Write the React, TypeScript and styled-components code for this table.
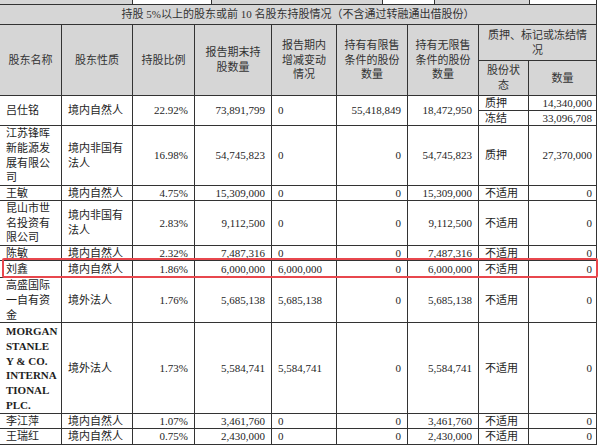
import React from "react";
import styled, { createGlobalStyle } from "styled-components";

type Pledge = { status: string; qty: string };

type Holder = {
  name: string[];
  nature: string[];
  pct: string;
  total: string;
  change: string;
  limited: string;
  unlimited: string;
  pledges: Pledge[];
  h: number;
  latin?: boolean;
};

const COLS = [62, 71, 62, 77, 65, 71, 71, 50, 68];

const holders: Holder[] = [
  {
    name: ["吕仕铭"],
    nature: ["境内自然人"],
    pct: "22.92%",
    total: "73,891,799",
    change: "0",
    limited: "55,418,849",
    unlimited: "18,472,950",
    pledges: [
      { status: "质押", qty: "14,340,000" },
      { status: "冻结", qty: "33,096,708" },
    ],
    h: 15,
  },
  {
    name: ["江苏锋晖", "新能源发", "展有限公", "司"],
    nature: ["境内非国有", "法人"],
    pct: "16.98%",
    total: "54,745,823",
    change: "0",
    limited: "0",
    unlimited: "54,745,823",
    pledges: [{ status: "质押", qty: "27,370,000" }],
    h: 60,
  },
  {
    name: ["王敏"],
    nature: ["境内自然人"],
    pct: "4.75%",
    total: "15,309,000",
    change: "0",
    limited: "0",
    unlimited: "15,309,000",
    pledges: [{ status: "不适用", qty: "0" }],
    h: 15,
  },
  {
    name: ["昆山市世", "名投资有", "限公司"],
    nature: ["境内非国有", "法人"],
    pct: "2.83%",
    total: "9,112,500",
    change: "0",
    limited: "0",
    unlimited: "9,112,500",
    pledges: [{ status: "不适用", qty: "0" }],
    h: 45,
  },
  {
    name: ["陈敏"],
    nature: ["境内自然人"],
    pct: "2.32%",
    total: "7,487,316",
    change: "0",
    limited: "0",
    unlimited: "7,487,316",
    pledges: [{ status: "不适用", qty: "0" }],
    h: 15,
  },
  {
    name: ["刘鑫"],
    nature: ["境内自然人"],
    pct: "1.86%",
    total: "6,000,000",
    change: "6,000,000",
    limited: "0",
    unlimited: "6,000,000",
    pledges: [{ status: "不适用", qty: "0" }],
    h: 17,
  },
  {
    name: ["高盛国际", "一自有资", "金"],
    nature: ["境外法人"],
    pct: "1.76%",
    total: "5,685,138",
    change: "5,685,138",
    limited: "0",
    unlimited: "5,685,138",
    pledges: [{ status: "不适用", qty: "0" }],
    h: 44,
  },
  {
    name: ["MORGAN", "STANLE", "Y & CO.", "INTERNA", "TIONAL", "PLC."],
    nature: ["境外法人"],
    pct: "1.73%",
    total: "5,584,741",
    change: "5,584,741",
    limited: "0",
    unlimited: "5,584,741",
    pledges: [{ status: "不适用", qty: "0" }],
    h: 91,
    latin: true,
  },
  {
    name: ["李江萍"],
    nature: ["境内自然人"],
    pct: "1.07%",
    total: "3,461,760",
    change: "0",
    limited: "0",
    unlimited: "3,461,760",
    pledges: [{ status: "不适用", qty: "0" }],
    h: 15,
  },
  {
    name: ["王瑞红"],
    nature: ["境内自然人"],
    pct: "0.75%",
    total: "2,430,000",
    change: "0",
    limited: "0",
    unlimited: "2,430,000",
    pledges: [{ status: "不适用", qty: "0" }],
    h: 16,
  },
];

const topStrip = [
  { w: 133, gray: true },
  { w: 79, gray: false },
  { w: 171, gray: true },
  { w: 52, gray: false },
  { w: 95, gray: true },
  { w: 67, gray: false },
];

const Lines: React.FC<{ lines: string[] }> = ({ lines }) => (
  <>
    {lines.map((line, i) => (
      <React.Fragment key={i}>
        {i > 0 && <br />}
        {line}
      </React.Fragment>
    ))}
  </>
);

const App: React.FC = () => {
  return (
    <>
      <GlobalStyle />
      <Page>
        <Strip>
          {topStrip.map((s, i) => (
            <StripCell key={i} $w={s.w} $gray={s.gray} />
          ))}
        </Strip>
        <Table>
          <colgroup>
            {COLS.map((w, i) => (
              <col key={i} style={{ width: w }} />
            ))}
          </colgroup>
          <tbody>
            <Row $h={20}>
              <HeadCell colSpan={9}>
                持股 5%以上的股东或前 10 名股东持股情况（不含通过转融通出借股份）
              </HeadCell>
            </Row>
            <Row $h={36}>
              <HeadCell rowSpan={2}>股东名称</HeadCell>
              <HeadCell rowSpan={2}>股东性质</HeadCell>
              <HeadCell rowSpan={2}>持股比例</HeadCell>
              <HeadCell rowSpan={2}>
                报告期末持
                <br />
                股数量
              </HeadCell>
              <HeadCell rowSpan={2}>
                报告期内
                <br />
                增减变动
                <br />
                情况
              </HeadCell>
              <HeadCell rowSpan={2}>
                持有有限售
                <br />
                条件的股份
                <br />
                数量
              </HeadCell>
              <HeadCell rowSpan={2}>
                持有无限售
                <br />
                条件的股份
                <br />
                数量
              </HeadCell>
              <HeadCell colSpan={2}>
                质押、标记或冻结情
                <br />况
              </HeadCell>
            </Row>
            <Row $h={35}>
              <HeadCell>
                股份状
                <br />态
              </HeadCell>
              <HeadCell>数量</HeadCell>
            </Row>
            {holders.map((r, idx) => {
              const span = r.pledges.length;
              const [first, ...rest] = r.pledges;
              return (
                <React.Fragment key={idx}>
                  <Row $h={r.h} $tight={r.h < 20}>
                    <NameCell rowSpan={span} $latin={r.latin}>
                      <Lines lines={r.name} />
                    </NameCell>
                    <Cell rowSpan={span}>
                      <Lines lines={r.nature} />
                    </Cell>
                    <Cell rowSpan={span} $align="right">
                      {r.pct}
                    </Cell>
                    <Cell rowSpan={span} $align="right">
                      {r.total}
                    </Cell>
                    <Cell rowSpan={span}>{r.change}</Cell>
                    <Cell rowSpan={span} $align="right">
                      {r.limited}
                    </Cell>
                    <Cell rowSpan={span} $align="right">
                      {r.unlimited}
                    </Cell>
                    <Cell>{first.status}</Cell>
                    <Cell $align="right" $tightRight>
                      {first.qty}
                    </Cell>
                  </Row>
                  {rest.map((p, j) => (
                    <Row key={j} $h={r.h} $tight>
                      <Cell>{p.status}</Cell>
                      <Cell $align="right" $tightRight>
                        {p.qty}
                      </Cell>
                    </Row>
                  ))}
                </React.Fragment>
              );
            })}
          </tbody>
        </Table>
        <Strip>
          <StripCell $w={133} $gray />
          <StripCell $w={464} $gray={false} />
        </Strip>
        <Highlight />
      </Page>
    </>
  );
};

export default App;

const GlobalStyle = createGlobalStyle`
  html, body {
    margin: 0;
    padding: 0;
    background: #ffffff;
  }

  body {
    font-family: "Liberation Serif", "Noto Sans CJK SC", serif;
    color: #222;
  }
`;

const Page = styled.div`
  position: relative;
  width: 600px;
  height: 445px;
  overflow: hidden;
`;

const Strip = styled.div`
  display: flex;
  height: 4px;
  width: 598px;
`;

const StripCell = styled.div<{ $w: number; $gray: boolean }>`
  width: ${(p) => p.$w}px;
  flex: none;
  background: ${(p) => (p.$gray ? "#d6d6d6" : "#ffffff")};
  border-right: 1px solid #333;
  box-sizing: border-box;
`;

const Table = styled.table`
  border-collapse: collapse;
  table-layout: fixed;
  width: 598px;
  margin-left: -1px;
  font-size: 11px;
  line-height: 14.7px;
`;

const Row = styled.tr<{ $h: number; $tight?: boolean }>`
  height: ${(p) => p.$h}px;
  line-height: ${(p) => (p.$tight ? "13px" : "14.7px")};
`;

const HeadCell = styled.td`
  background: #d6d6d6;
  border: 1px solid #333;
  text-align: center;
  vertical-align: middle;
  padding: 0 2px;
  color: #333;
  white-space: nowrap;
`;

const Cell = styled.td<{ $align?: "left" | "right"; $tightRight?: boolean }>`
  border: 1px solid #333;
  text-align: ${(p) => p.$align ?? "left"};
  vertical-align: middle;
  padding: 0 ${(p) => (p.$tightRight ? 4 : 6)}px 0 6px;
  white-space: nowrap;
  color: #1e1e1e;
`;

const NameCell = styled(Cell)<{ $latin?: boolean }>`
  padding-left: 6px;
  font-weight: ${(p) => (p.$latin ? 700 : 400)};
`;

const Highlight = styled.div`
  position: absolute;
  left: 2px;
  top: 258px;
  width: 596px;
  height: 20px;
  box-sizing: border-box;
  border: 2px solid #e8474d;
  border-radius: 2px;
  pointer-events: none;
`;
